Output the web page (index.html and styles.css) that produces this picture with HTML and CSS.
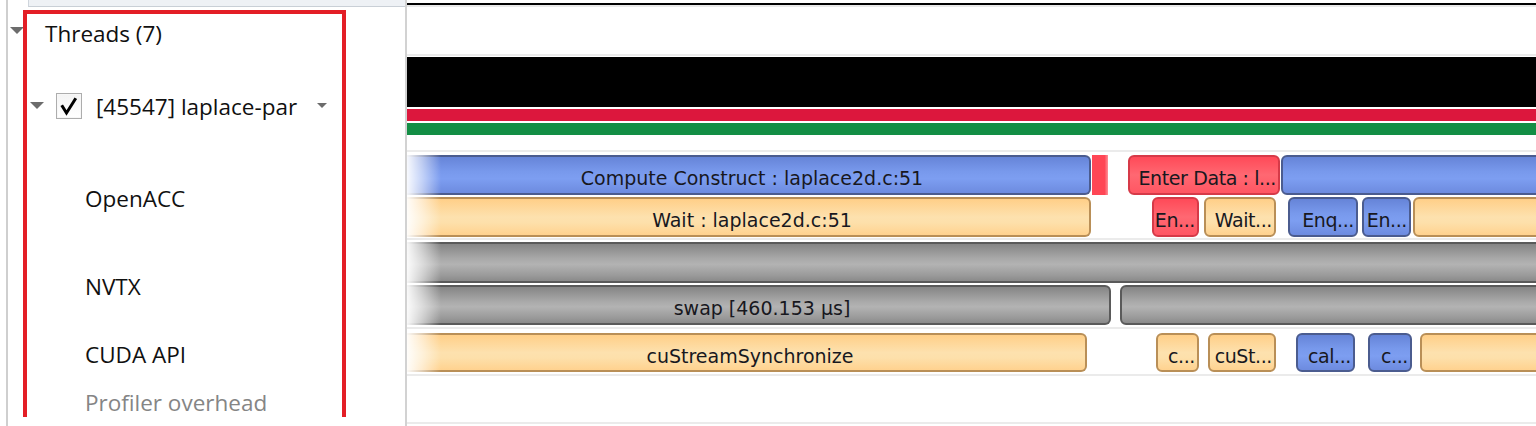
FILE: index.html
```html
<!DOCTYPE html>
<html>
<head>
<meta charset="utf-8">
<link rel="stylesheet" href="styles.css">
</head>
<body>
<div class="app">
  <div class="grid">
    <!-- header row -->
    <div class="side head-side"><div class="side-box"></div></div>
    <div class="track head-track"><div class="ruler-black"></div></div>

    <!-- Threads -->
    <div class="side cell">
      <span class="caret caret-threads"></span>
      <span class="lbl lbl-threads">Threads (7)</span>
    </div>
    <div class="track row-threads"></div>

    <!-- process / thread -->
    <div class="side cell">
      <span class="caret caret-proc"></span>
      <span class="check"><svg width="26" height="26" viewBox="0 0 26 26"><path d="M6.5 13.5 L10.5 20 L19 6.5" fill="none" stroke="#000" stroke-width="3" stroke-linecap="square" stroke-linejoin="miter"/></svg></span>
      <span class="lbl lbl-proc">[45547] laplace-par</span>
      <span class="caret caret-drop"></span>
    </div>
    <div class="track row-proc">
      <div class="util util-black"></div>
      <div class="util util-red"></div>
      <div class="util util-green"></div>
    </div>

    <!-- OpenACC -->
    <div class="side cell"><span class="lbl lbl-sub">OpenACC</span></div>
    <div class="track row-acc fade">
      <div class="lane lane-40">
        <div class="bar blue cut" style="left:0;width:684px"><span class="txt">Compute Construct : laplace2d.c:51</span></div>
        <div class="marker" style="left:685px;width:16px"></div>
        <div class="bar red short" style="left:721px;width:152px"><span class="txt">Enter Data : l...</span></div>
        <div class="bar blue" style="left:874px;width:420px"></div>
      </div>
      <div class="lane lane-40">
        <div class="bar orange cut" style="left:0;width:684px"><span class="txt">Wait : laplace2d.c:51</span></div>
        <div class="bar red short" style="left:745px;width:47px"><span class="txt">En...</span></div>
        <div class="bar orange short" style="left:797px;width:72px"><span class="txt">Wait...</span></div>
        <div class="bar blue short" style="left:881px;width:70px"><span class="txt">Enq...</span></div>
        <div class="bar blue short" style="left:955px;width:49px"><span class="txt">En...</span></div>
        <div class="bar orange" style="left:1006px;width:300px"></div>
      </div>
    </div>

    <!-- NVTX -->
    <div class="side cell"><span class="lbl lbl-sub">NVTX</span></div>
    <div class="track row-nvtx fade">
      <div class="lane lane-41">
        <div class="bar gray cut" style="left:0;width:1300px"></div>
      </div>
      <div class="lane lane-40">
        <div class="bar gray cut" style="left:0;width:704px"><span class="txt">swap [460.153 µs]</span></div>
        <div class="bar gray" style="left:713px;width:500px"></div>
      </div>
    </div>

    <!-- CUDA API -->
    <div class="side cell"><span class="lbl lbl-sub">CUDA API</span></div>
    <div class="track row-cuda fade">
      <div class="lane lane-39">
        <div class="bar orange cut" style="left:0;width:680px"><span class="txt">cuStreamSynchronize</span></div>
        <div class="bar orange short" style="left:749px;width:43px"><span class="txt">c...</span></div>
        <div class="bar orange short" style="left:801px;width:68px"><span class="txt">cuSt...</span></div>
        <div class="bar blue short" style="left:889px;width:59px"><span class="txt">cal...</span></div>
        <div class="bar blue short" style="left:961px;width:44px"><span class="txt">c...</span></div>
        <div class="bar orange" style="left:1013px;width:300px"></div>
      </div>
    </div>

    <!-- Profiler overhead -->
    <div class="side cell"><span class="lbl lbl-sub lbl-muted">Profiler overhead</span></div>
    <div class="track row-prof"></div>

    <div class="side tail-side"></div>
    <div class="track tail-track"></div>
  </div>
  <div class="annot"></div>
</div>
</body>
</html>
```

FILE: styles.css
```css
* { box-sizing: border-box; }
html, body { margin: 0; padding: 0; background: #fff; }
body { width: 1536px; height: 426px; overflow: hidden; }

.app {
  position: relative;
  width: 1536px;
  height: 426px;
  overflow: hidden;
  font-family: "Open Sans", "Noto Sans", sans-serif;
}

.grid {
  display: grid;
  grid-template-columns: 407px 1fr;
  grid-template-rows: 7px 49px 96px 88px 89px 47px 48px 2px;
}

/* ---- left tree panel ---- */
.side {
  border-right: 2px solid #d2d2d2;
  background: linear-gradient(to right, transparent 6px, #cfcfcf 6px, #cfcfcf 8px, transparent 8px);
}
.head-side { padding-left: 28px; }
.side-box {
  height: 7px;
  background: #eef1f5;
  border-left: 1px solid #cfd5dc;
  border-bottom: 1px solid #c9cfd6;
}

.cell {
  display: flex;
  align-items: center;
  padding-top: 4px;
}

.lbl {
  font-size: 22.5px;
  color: #101010;
  white-space: nowrap;
}
.lbl-threads { margin-left: 21px; }
.lbl-proc { margin-left: 14px; }
.lbl-sub { margin-left: 85px; }
.lbl-muted { color: #858585; }

.caret {
  width: 0; height: 0;
  border-left: 7px solid transparent;
  border-right: 7px solid transparent;
  border-top: 7px solid #6c6c6c;
}
.caret-threads { margin-left: 10px; margin-top: -6px; }
.caret-proc { margin-left: 30px; margin-top: -2px; }
.caret-drop {
  margin-left: 20px;
  margin-top: -2px;
  border-left-width: 5px;
  border-right-width: 5px;
  border-top-width: 5px;
}

.check {
  width: 26px; height: 26px;
  margin-left: 12px;
  border: 1px solid #adadad;
  background: linear-gradient(#f3f3f3, #ffffff);
  box-shadow: inset 0 0 0 1px #f7f7f7;
  display: flex;
  align-items: center;
  justify-content: center;
}
.check svg { display: block; margin: -1px; }

/* ---- timeline ---- */
.track {
  position: relative;
  border-bottom: 2px solid #ebebeb;
  overflow: hidden;
}
.head-track {
  padding-top: 3px;
  border-bottom: 2px solid #e9e9e9;
}
.ruler-black { height: 2px; background: #000; }

.row-proc {
  display: flex;
  flex-direction: column;
  gap: 2px;
  padding-top: 1px;
}
.util-black { height: 50px; background: #000; }
.util-red { height: 12px; background: #dc173d; }
.util-green { height: 12px; background: #138e45; }

.row-acc { display: flex; flex-direction: column; gap: 2px; padding-top: 3px; }
.row-nvtx { display: flex; flex-direction: column; gap: 2px; padding-top: 2px; }
.row-cuda { display: flex; flex-direction: column; padding-top: 4px; }
.tail-track { border-bottom: none; }

.fade::after {
  content: "";
  position: absolute;
  left: 0; top: 0; bottom: 0;
  width: 34px;
  background: linear-gradient(to right, rgba(255,255,255,0.95), rgba(255,255,255,0.55) 45%, rgba(255,255,255,0));
  pointer-events: none;
}

.lane { position: relative; }
.lane-40 { height: 40px; }
.lane-41 { height: 41px; }
.lane-39 { height: 39px; }

.bar {
  position: absolute;
  top: 0; bottom: 0;
  border: 2px solid;
  border-radius: 6px;
  display: flex;
  align-items: center;
  justify-content: center;
  padding-top: 6px;
  overflow: hidden;
  font-family: "DejaVu Sans", sans-serif;
  font-size: 19px;
  color: #18181e;
  white-space: nowrap;
}
.bar.cut { border-left: none; border-radius: 0 6px 6px 0; padding-left: 8px; }
.bar.short {
  justify-content: flex-end;
  padding-left: 0;
  padding-right: 2px;
  letter-spacing: -0.4px;
}

.blue {
  border-color: #4b5c8f;
  background: linear-gradient(#6684d8 0%, #7899ec 40%, #7d9ef1 60%, #6d8bdf 100%);
}
.orange {
  border-color: #b98f57;
  background: linear-gradient(#ffcf88 0%, #fde1ae 50%, #fde0ab 65%, #ffd28f 100%);
}
.gray {
  border-color: #5a5a5a;
  background: linear-gradient(#858585 0%, #a9a9a9 40%, #b3b3b3 55%, #9a9a9a 85%, #8a8a8a 100%);
}
.red {
  border-color: #d63a48;
  background: linear-gradient(#ff4a58 0%, #ff6872 50%, #ff5663 100%);
}
.marker {
  position: absolute;
  top: 0; bottom: 0;
  background: linear-gradient(to right, #ff4655 0%, #ff4655 78%, #ff9098 100%);
}

/* ---- annotation frame ---- */
.annot {
  position: absolute;
  left: 23px;
  top: 10px;
  width: 323px;
  height: 407px;
  border: 4px solid #e31e26;
  border-bottom: none;
  pointer-events: none;
}
```
